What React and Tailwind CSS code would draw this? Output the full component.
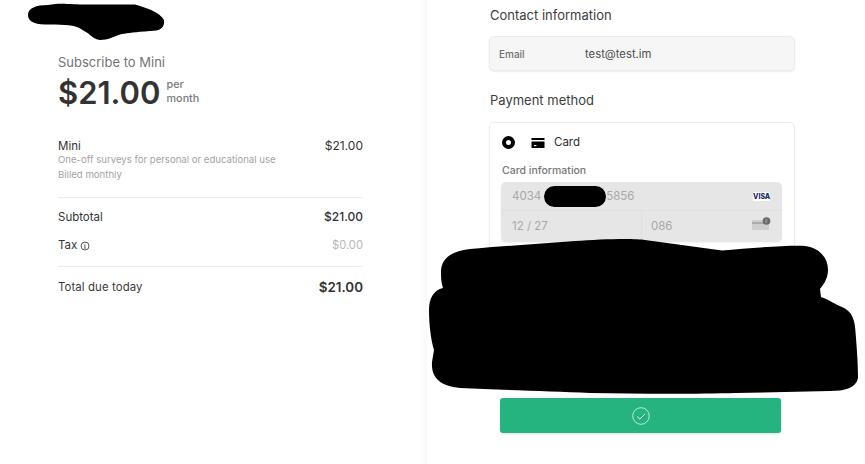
import React from 'react'

const FONT = "font-['Inter',sans-serif]"

function SummaryRow({ label, value, labelClass = '', valueClass = '' }) {
  return (
    <div className="flex items-center justify-between">
      <div className={labelClass}>{label}</div>
      <div className={valueClass}>{value}</div>
    </div>
  )
}

function Summary() {
  return (
    <div className="w-[427px] shrink-0 h-full bg-gradient-to-l from-[#f9f9f9] to-white to-[7px] pl-[58px] pr-[64px] pt-[55px]">
      <div className="text-[13px] leading-[15px] text-[#747474]">Subscribe to Mini</div>
      <div className="flex items-center mt-[4px] h-[38px]">
        <div className="text-[31px] leading-[38px] font-semibold text-[#333333]">$21.00</div>
        <div className="ml-[6px] -mt-[3px] text-[10.8px] leading-[14px] font-medium text-[#7a7a7a]">
          <div>per</div>
          <div>month</div>
        </div>
      </div>

      <div className="mt-[27px] h-[59px] border-b border-[#ececec]">
        <SummaryRow label="Mini" value="$21.00" labelClass="text-[11.5px] leading-[14px] text-[#333333]" valueClass="text-[12px] leading-[14px] text-[#333333]" />
        <div className="text-[9.6px] leading-[14px] text-[#a3a3a3]">One-off surveys for personal or educational use</div>
        <div className="text-[9.6px] leading-[14px] text-[#a3a3a3] mt-[1px]">Billed monthly</div>
      </div>

      <SummaryRow label="Subtotal" value="$21.00" labelClass="mt-[12px] text-[11.5px] leading-[14px] text-[#333333]" valueClass="mt-[12px] text-[12px] leading-[14px] font-medium text-[#333333]" />
      <div className="flex items-center justify-between mt-[14px] pb-[14px] border-b border-[#ececec]">
        <div className="flex items-center gap-[3px] text-[11.5px] leading-[14px] text-[#333333]">
          Tax
          <svg width="10" height="10" viewBox="0 0 10 10" fill="none" className="mt-[1px]">
            <circle cx="5" cy="5" r="4" stroke="#444" strokeWidth="0.9" />
            <path d="M5 4.4V7.2M4.2 7.2H5.8M4.3 4.4H5" stroke="#444" strokeWidth="0.8" />
            <circle cx="5" cy="3" r="0.55" fill="#444" />
          </svg>
        </div>
        <div className="text-[11.2px] leading-[14px] text-[#b8b8b8]">$0.00</div>
      </div>
      <div className="flex items-center justify-between mt-[12px]">
        <div className="text-[11.4px] leading-[16px] text-[#3a3a3a] tracking-[0.1px]">Total due today</div>
        <div className="text-[13.4px] leading-[16px] font-semibold text-[#333333]">$21.00</div>
      </div>
    </div>
  )
}

function CardForm() {
  return (
    <div className="mt-[14px] -ml-[1px] h-[140px] border border-[#ececec] rounded-[5px] px-[12px] shadow-[0_1px_2px_rgba(0,0,0,0.04)]">
      <div className="flex items-center h-[38px] pt-[1px]">
        <div className="w-[13px] h-[13px] rounded-full border-[4px] border-black bg-white" />
        <svg width="14" height="10" viewBox="0 0 14 10" className="ml-[16px]">
          <path d="M0.5 0H13.5V2H0.5ZM0.5 3.6H13.5V10H0.5Z" fill="#000" />
          <rect x="3" y="7" width="2.4" height="1.1" fill="#fff" />
        </svg>
        <div className="ml-[9px] text-[11.5px] text-[#2e2e2e]">Card</div>
      </div>
      <div className="mt-[3px] text-[10.5px] leading-[14px] font-medium text-[#777777]">Card information</div>
      <div className="mt-[4px] -mx-[1px] w-[281px] rounded-[5px] bg-[#e6e6e6] text-[11.5px] text-[#a8a8a8] shadow-[0_1px_2px_rgba(0,0,0,0.06)]">
        <div className="flex items-center h-[29px] pt-[1px] pl-[11px] pr-[12px] border-b border-[#e0e0e0]">
          <span>4034</span>
          <div className="w-[62px] h-[21px] ml-[3px] rounded-full bg-black" />
          <span>5856</span>
          <div className="ml-auto w-[17px] h-[9px] bg-white text-center text-[7px] leading-[9px] font-extrabold text-[#1a2a6c]">VISA</div>
        </div>
        <div className="flex h-[31px]">
          <div className="flex w-[141px] items-center pl-[11px] border-r border-[#e0e0e0]">12 / 27</div>
          <div className="flex flex-1 items-center pl-[9px] pr-[11px] justify-between">
            <span>086</span>
            <svg width="19" height="14" viewBox="0 0 19 14" className="-mt-[6px]">
              <rect x="0" y="3" width="17" height="10" rx="1" fill="#cecece" />
              <rect x="0" y="5" width="17" height="2" fill="#acacac" />
              <circle cx="14.5" cy="4" r="3.8" fill="#6a6a6a" />
              <path d="M13 3H15.500M13 5H15.500" stroke="#c4c4c4" strokeWidth="0.7" />
            </svg>
          </div>
        </div>
      </div>
    </div>
  )
}

function Checkout() {
  return (
    <div className="flex-1 h-full pl-[63px] pt-[7px] bg-white">
      <div className="w-[305px]">
        <div className="text-[13px] leading-[16px] text-[#3d3d3d]">Contact information</div>
        <div className="mt-[13px] -ml-[1px] h-[35px] flex items-center rounded-[5px] border border-[#ececec] bg-[#f6f6f6] pl-[9px] shadow-[0_1px_2px_rgba(0,0,0,0.08)]">
          <div className="w-[86px] pt-[1px] text-[10px] font-medium text-[#6f6f6f]">Email</div>
          <div className="pt-[1px] text-[11.3px] text-[#4d4d4d]">test@test.im</div>
        </div>
        <div className="mt-[21px] text-[13px] leading-[16px] text-[#3d3d3d]">Payment method</div>
        <CardForm />
        <button className="mt-[136px] ml-[10px] flex h-[35px] w-[281px] items-center justify-center rounded-[3px] bg-[#25b480] shadow-[0_1px_3px_rgba(0,0,0,0.15)]">
          <svg width="18" height="18" viewBox="0 0 18 18" fill="none">
            <circle cx="9" cy="9" r="8.3" stroke="#c9efe0" strokeWidth="0.9" />
            <path d="M5.2 9.6L7.8 12L13 7" stroke="#e6f8f1" strokeWidth="1" />
          </svg>
        </button>
      </div>
    </div>
  )
}

export default function App() {
  return (
    <div className={`${FONT} relative flex h-[464px] w-[865px] overflow-hidden bg-white`}>
      <Summary />
      <Checkout />
      {/* redaction scribbles drawn over the page */}
      <svg width="865" height="464" viewBox="0 0 865 464" className="absolute left-0 top-0 pointer-events-none">
        <path
          fill="#000"
          d="M28 15C28 8 36 5 48 5C60 3 64 4 80 4.500L135 4.500C146 8 160 12 164 20C165 28 160 31 150 31C135 32 128 33 122 34C112 37 108 40 100 40C92 39 91 34 84 31C76 25 70 25 55 24.500C40 25 28 24 28 15Z"
        />
        <path
          fill="#000"
          d="M441 272C441 258 452 251 470 249C500 246 540 244 575 241C600 239 635 238 645 240L722 250.500C750 248 790 245 805 246C820 248 828 258 828 270C828 280 822 286 820 289L821 297C830 300 836 305 842 307C852 311 855 320 855.500 332C857 350 858 365 858 378C856 388 845 391 830 391L735 393C700 394 640 394 590 393C550 391 500 390 460 388C440 386 431 378 432 362L434 350C431 340 429 325 429 310C429 298 434 290 443 288C441 282 441 278 441 272Z"
        />
      </svg>
    </div>
  )
}
